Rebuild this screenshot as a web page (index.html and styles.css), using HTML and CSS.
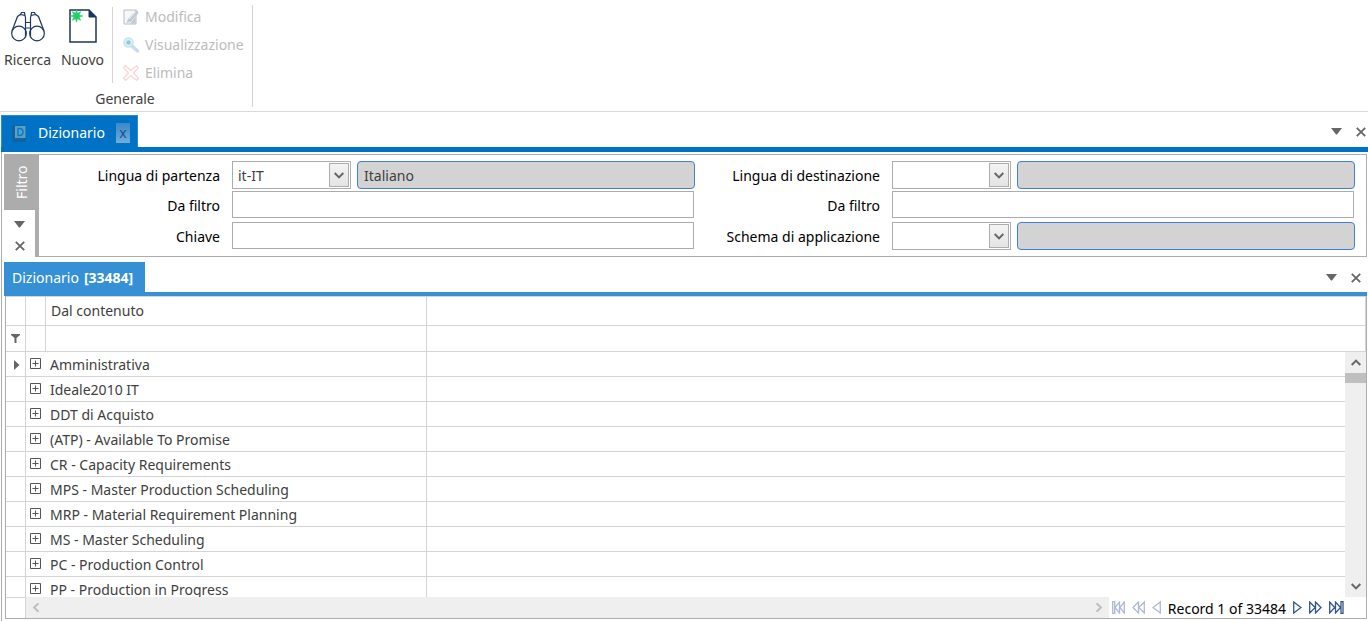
FILE: index.html
```html
<!DOCTYPE html>
<html lang="it">
<head>
<meta charset="utf-8">
<title>Dizionario</title>
<link rel="stylesheet" href="styles.css">
</head>
<body>
<svg class="defs" aria-hidden="true">
  <symbol id="down" viewBox="0 0 12 8"><path d="M0 0h11L6 6.5H5z" fill="#666"/></symbol>
  <symbol id="close" viewBox="0 0 10 10"><path d="M.8.8l8.4 8.4M9.2.8L.8 9.2" fill="none" stroke="#666" stroke-width="1.8"/></symbol>
  <symbol id="chevron" viewBox="0 0 10 7"><path d="M.7 1L5 5.4 9.3 1" fill="none" stroke="currentColor" stroke-width="2"/></symbol>
  <symbol id="plus" viewBox="0 0 11 11"><path d="M.5.5h10v10H.5zM5.5 2.5v6M2.5 5.5h6" fill="none" stroke="#555"/></symbol>
</svg>

<header class="ribbon">
  <section class="group" aria-labelledby="group-title">
    <div class="tools">
      <button class="big" type="button">
        <svg width="34" height="34" viewBox="0 0 34 34" fill="none" stroke="#1d365b" stroke-width="1.2">
          <circle cx="8" cy="24.5" r="7.3"/><circle cx="26" cy="24.5" r="7.3"/>
          <path d="M1 22L6.5 7.5 9.5 5.5 14 6.5 14.5 9v18M33 22L27.5 7.5 24.5 5.5 20 6.5 19.5 9v18M14.5 13.5h5M14.5 19h5M9.5 5.5L10.5 3.5h3L14 6.5M24.5 5.5L23.5 3.5h-3L20 6.5"/>
        </svg>
        <span>Ricerca</span>
      </button>
      <button class="big" type="button">
        <svg width="28" height="34" viewBox="0 0 28 34">
          <path d="M1 1h19l7 7v25H1z" fill="#fff" stroke="#1d365b" stroke-width="1.5"/>
          <path d="M20 1l7 7h-7z" fill="#1d365b" stroke="#1d365b"/>
          <path d="M7.5 1l1 3.3L11.7 2.6 10.2 5.9 14 7l-3.8 1.1 1.5 3.3L8.5 9.7l-1 3.5-1-3.5-3.2 1.7 1.5-3.3L1 7l3.8-1.1L3.3 2.6l3.2 1.7z" fill="#22cf68" stroke="#22cf68" stroke-width=".5"/>
        </svg>
        <span>Nuovo</span>
      </button>
      <div class="smalls">
        <button class="small" type="button" disabled>
          <svg width="16" height="16" viewBox="0 0 16 16"><path d="M1 1h12v14H1z" fill="#f5f7f9" stroke="#b5bec8"/><path d="M14 .5L5 10l-1.500 4L8 12.500 15.500 4z" fill="#c0cad3"/><path d="M12.500 8v6.500H7z" fill="#c0cad3"/><path d="M12.500 3L6 10" stroke="#eef2f5"/></svg>
          Modifica
        </button>
        <button class="small" type="button" disabled>
          <svg width="16" height="16" viewBox="0 0 16 16"><circle cx="5.5" cy="5.5" r="4.5" fill="#dcf3f8" stroke="#c5e3ec" stroke-width="1.5"/><circle cx="5.5" cy="5.5" r="2.2" fill="#8fc8db"/><path d="M9 9l5.5 5" stroke="#c6dfe9" stroke-width="3.5" stroke-linecap="round"/></svg>
          Visualizzazione
        </button>
        <button class="small" type="button" disabled>
          <svg width="16" height="16" viewBox="0 0 16 16"><path d="M2.500.7L8 5.500 13.500.7l2 2L10.500 8l5 5.300-2 2L8 10.500 2.500 15.300l-2-2L5.500 8l-5-5.300z" fill="#fff" stroke="#fbd5d8" stroke-width="1.3"/></svg>
          Elimina
        </button>
      </div>
    </div>
    <div class="group-title" id="group-title">Generale</div>
  </section>
</header>

<main class="workspace">
  <div class="tabs main-tabs">
    <div class="tab main-tab">
      <svg width="14" height="17" viewBox="0 0 14 17"><path d="M1 1h12v15H2L1 15z" fill="#17649c" stroke="#155b90"/><path d="M3 1h10.500v12H3z" fill="#5aa0c0"/><path d="M6 3.500h1.500q3.500 0 3.500 3.500t-3.500 3.500H6z" fill="none" stroke="#087bd0" stroke-width="1.5"/></svg>
      <span>Dizionario</span>
      <button class="tab-close" type="button" aria-label="Chiudi scheda">x</button>
    </div>
    <div class="window-buttons">
      <button type="button" aria-label="Elenco schede"><svg width="12" height="8"><use href="#down"/></svg></button>
      <button type="button" aria-label="Chiudi"><svg width="10" height="10"><use href="#close"/></svg></button>
    </div>
  </div>

  <div class="content">
    <section class="filter" aria-label="Filtro">
      <div class="side">
        <div class="side-tab">Filtro</div>
        <div class="side-buttons">
          <button type="button" aria-label="Riduci filtro"><svg width="12" height="8"><use href="#down"/></svg></button>
          <button type="button" aria-label="Chiudi filtro"><svg width="10" height="10"><use href="#close"/></svg></button>
        </div>
      </div>
      <form class="fields">
        <label for="from">Lingua di partenza</label>
        <div class="lookup">
          <div class="select"><select id="from"><option>it-IT</option></select><span class="drop"><svg width="10" height="7"><use href="#chevron"/></svg></span></div>
          <input class="readonly" value="Italiano" readonly aria-label="Nome lingua di partenza">
        </div>
        <label for="to">Lingua di destinazione</label>
        <div class="lookup">
          <div class="select"><select id="to"><option></option></select><span class="drop"><svg width="10" height="7"><use href="#chevron"/></svg></span></div>
          <input class="readonly" readonly aria-label="Nome lingua di destinazione">
        </div>
        <label for="from-filter">Da filtro</label><input class="text" id="from-filter">
        <label for="to-filter">Da filtro</label><input class="text" id="to-filter">
        <label for="key">Chiave</label><input class="text" id="key">
        <label for="schema">Schema di applicazione</label>
        <div class="lookup">
          <div class="select"><select id="schema"><option></option></select><span class="drop"><svg width="10" height="7"><use href="#chevron"/></svg></span></div>
          <input class="readonly" readonly aria-label="Nome schema di applicazione">
        </div>
      </form>
    </section>

    <div class="tabs sub-tabs">
      <div class="tab sub-tab">Dizionario <b>[33484]</b></div>
      <div class="window-buttons">
        <button type="button" aria-label="Elenco schede"><svg width="12" height="8"><use href="#down"/></svg></button>
        <button type="button" aria-label="Chiudi"><svg width="10" height="10"><use href="#close"/></svg></button>
      </div>
    </div>

    <section class="grid">
      <div class="viewport">
        <table>
          <colgroup><col class="c-mark"><col class="c-expand"><col class="c-name"><col></colgroup>
          <thead>
            <tr class="head"><th></th><th></th><th>Dal contenuto</th><th></th></tr>
            <tr class="filters"><td class="mark"><svg width="9" height="10" viewBox="0 0 9 10"><path d="M0 0h9v1L5.5 4V9h-2V4L0 1z" fill="#666"/></svg></td><td></td><td></td><td></td></tr>
          </thead>
          <tbody>
            <tr><td class="mark"><svg width="6" height="10" viewBox="0 0 6 10"><path d="M0 0l5.5 5L0 10z" fill="#666"/></svg></td><td class="name" colspan="2"><button type="button" aria-label="Espandi"><svg width="11" height="11"><use href="#plus"/></svg></button>Amministrativa</td><td></td></tr>
            <tr><td></td><td class="name" colspan="2"><button type="button" aria-label="Espandi"><svg width="11" height="11"><use href="#plus"/></svg></button>Ideale2010 IT</td><td></td></tr>
            <tr><td></td><td class="name" colspan="2"><button type="button" aria-label="Espandi"><svg width="11" height="11"><use href="#plus"/></svg></button>DDT di Acquisto</td><td></td></tr>
            <tr><td></td><td class="name" colspan="2"><button type="button" aria-label="Espandi"><svg width="11" height="11"><use href="#plus"/></svg></button>(ATP) - Available To Promise</td><td></td></tr>
            <tr><td></td><td class="name" colspan="2"><button type="button" aria-label="Espandi"><svg width="11" height="11"><use href="#plus"/></svg></button>CR - Capacity Requirements</td><td></td></tr>
            <tr><td></td><td class="name" colspan="2"><button type="button" aria-label="Espandi"><svg width="11" height="11"><use href="#plus"/></svg></button>MPS - Master Production Scheduling</td><td></td></tr>
            <tr><td></td><td class="name" colspan="2"><button type="button" aria-label="Espandi"><svg width="11" height="11"><use href="#plus"/></svg></button>MRP - Material Requirement Planning</td><td></td></tr>
            <tr><td></td><td class="name" colspan="2"><button type="button" aria-label="Espandi"><svg width="11" height="11"><use href="#plus"/></svg></button>MS - Master Scheduling</td><td></td></tr>
            <tr><td></td><td class="name" colspan="2"><button type="button" aria-label="Espandi"><svg width="11" height="11"><use href="#plus"/></svg></button>PC - Production Control</td><td></td></tr>
            <tr><td></td><td class="name" colspan="2"><button type="button" aria-label="Espandi"><svg width="11" height="11"><use href="#plus"/></svg></button>PP - Production in Progress</td><td></td></tr>
          </tbody>
        </table>
        <div class="vscroll">
          <button type="button" aria-label="Su"><svg class="up" width="10" height="7"><use href="#chevron"/></svg></button>
          <div class="thumb"></div>
          <button class="last" type="button" aria-label="Giù"><svg width="10" height="7"><use href="#chevron"/></svg></button>
        </div>
      </div>
      <footer class="bottom">
        <div class="corner"></div>
        <div class="hscroll">
          <button type="button" aria-label="Sinistra"><svg class="left" width="10" height="7"><use href="#chevron"/></svg></button>
          <button type="button" aria-label="Destra"><svg class="right" width="10" height="7"><use href="#chevron"/></svg></button>
        </div>
        <nav class="pager" aria-label="Record">
          <button type="button" disabled aria-label="Primo"><svg width="13" height="13" viewBox="0 0 13 13"><path d="M.7.5v12h2V.5zM7.5 1v11L3 6.5zM12.3 1v11L7.8 6.5z"/></svg></button>
          <button type="button" disabled aria-label="Pagina precedente"><svg width="13" height="13" viewBox="0 0 13 13"><path d="M6.5 1v11L1 6.5zM12.3 1v11L6.8 6.5z"/></svg></button>
          <button type="button" disabled aria-label="Precedente"><svg width="9" height="13" viewBox="0 0 9 13"><path d="M8.3 1v11L1 6.5z"/></svg></button>
          <span>Record 1 of 33484</span>
          <button type="button" aria-label="Successivo"><svg width="9" height="13" viewBox="0 0 9 13"><path d="M.7 1v11L8 6.5z"/></svg></button>
          <button type="button" aria-label="Pagina successiva"><svg width="13" height="13" viewBox="0 0 13 13"><path d="M.7 1v11l5.5-5.5zM6.5 1v11l5.5-5.5z"/></svg></button>
          <button type="button" aria-label="Ultimo"><svg width="15" height="13" viewBox="0 0 15 13"><path d="M.7 1v11l5-5.5zM6.5 1v11l5-5.5zM12 .5v12h2V.5z"/></svg></button>
        </nav>
      </footer>
    </section>
  </div>
</main>
</body>
</html>
```

FILE: styles.css
```css
* { box-sizing: border-box; }

body {
  margin: 0;
  height: 100vh;
  display: flex;
  flex-direction: column;
  overflow: hidden;
  background: #fff;
  color: #404040;
  font: 14px/20px "Noto Sans", "Open Sans", sans-serif;
}

button, input, select { font: inherit; color: inherit; margin: 0; }
button { padding: 0; border: 0; background: none; display: flex; align-items: center; justify-content: center; }
svg { display: block; flex: none; }
.defs { position: absolute; width: 0; height: 0; }

/* Ribbon */
.ribbon { flex: none; padding: 5px 0 4px; border-bottom: 1px solid #d9d9d9; display: flex; }
.group { width: 253px; border-right: 1px solid #d4d4d4; }
.tools { display: flex; align-items: flex-start; padding-top: 2px; }
.big { width: 55px; flex-direction: column; gap: 7px; padding-top: 2px; }
.smalls { margin-left: 2px; padding-left: 10px; border-left: 1px solid #d4d4d4; display: flex; flex-direction: column; gap: 8px; }
.small { gap: 6px; color: #bcbcbc; justify-content: flex-start; }
.group-title { text-align: center; line-height: 16px; padding: 8px 2px 0 0; }

/* Tabs */
.workspace { flex: 1; min-height: 0; display: flex; flex-direction: column; padding: 3px 0 0 1px; }
.tabs { display: flex; justify-content: space-between; flex: none; }
.main-tabs { border-bottom: 5px solid #0072c6; }
.tab { color: #fff; display: flex; align-items: center; }
.main-tab { height: 32px; padding: 3px 7px 0 10px; gap: 11px; background: #0072c6; border: 1px solid #2d8bd1; border-bottom: 0; }
.tab-close { width: 14px; height: 20px; background: linear-gradient(#3b88c8, #70addb); color: #1d4f88; }
.main-tab svg { margin-right: 1px; }
.window-buttons { display: flex; align-items: center; gap: 13px; padding: 2px 2px 0; }
.sub-tabs { border-bottom: 4px solid #3590d6; margin: 5px 0 0 2px; }
.sub-tab { height: 30px; padding: 2px 12px 0 8px; background: #3590d6; gap: 5px; }
.sub-tabs .window-buttons { padding-right: 6px; }
.content { flex: 1; min-height: 0; display: flex; flex-direction: column; border-left: 1px solid #acacac; padding: 2px 1px 2px 0; }

/* Filter */
.filter { display: flex; margin-left: 2px; }
.side { width: 35px; display: flex; flex-direction: column; background: #acacac; }
.side-tab { height: 56px; writing-mode: vertical-rl; transform: rotate(180deg); color: #fff; display: flex; align-items: center; justify-content: center; width: 35px; }
.side-buttons { flex: 1; width: 31px; background: #fff; display: flex; flex-direction: column; align-items: center; justify-content: center; gap: 12px; padding-top: 4px; }
.fields {
  flex: 1;
  display: grid;
  grid-template-columns: 181px 1fr 173px 1fr;
  grid-template-rows: 28px 29px 28px;
  column-gap: 12px;
  row-gap: 2px;
  padding: 6px 11px 6px 0;
  border: 1px solid #acacac;
  border-left: 0;
  align-items: start;
  color: #000;
}
.fields label { text-align: right; white-space: nowrap; line-height: 30px; }
.lookup { display: flex; gap: 6px; min-width: 0; height: 28px; color: #404040; }
.select { width: 119px; flex: none; display: grid; border: 1px solid #acacac; align-items: center; }
.select select { grid-area: 1 / 1; width: 100%; height: 26px; appearance: none; border: 0; padding: 2px 28px 0 5px; background: #fff; }
.drop { grid-area: 1 / 1; justify-self: end; margin-right: 1px; width: 20px; height: 24px; border: 1px solid #acacac; background: linear-gradient(#f3f3f3, #e4e4e4); display: flex; align-items: center; justify-content: center; color: #666; pointer-events: none; }
.readonly { flex: 1; min-width: 0; border: 1px solid #3f7fd8; border-radius: 4px; background: #d3d3d3; padding: 2px 6px 0; }
.text { height: 27px; min-width: 0; margin-right: 1px; border: 1px solid #acacac; padding: 0 5px; }

/* Data grid */
.grid { flex: 1; min-height: 0; display: flex; flex-direction: column; margin-left: 3px; border: solid #acacac; border-width: 0 1px 1px; }
.viewport { flex: 1; min-height: 0; overflow: hidden; position: relative; border-top: 1px solid #d4d4d4; }
table { width: 100%; table-layout: fixed; border-collapse: separate; border-spacing: 0; }
.c-mark, .c-expand { width: 20px; }
.c-name { width: 381px; }
th, td { height: 25px; padding: 0 0 0 5px; border: solid #d4d4d4; border-width: 0 1px 1px 0; font-weight: 400; text-align: left; white-space: nowrap; }
.head th { height: 29px; }
.filters td { height: 26px; }
tbody .mark { padding-left: 8px; }
tbody td { padding-top: 1px; }
.name { padding: 1px 0 0 4px; }
.name button { float: left; height: 18px; margin-right: 9px; }
.vscroll { position: absolute; top: 55px; right: 0; bottom: 0; width: 21px; background: #efefef; color: #666; display: flex; flex-direction: column; }
.vscroll button { height: 21px; }
.thumb { height: 10px; background: #bfbfbf; }
.last { margin-top: auto; }
.up { transform: rotate(180deg); }
.bottom { height: 21px; flex: none; display: flex; }
.corner { width: 20px; border: solid #d4d4d4; border-width: 1px 1px 0 0; }
.hscroll { flex: 1; background: #efefef; color: #bfbfbf; display: flex; justify-content: space-between; }
.hscroll button { width: 20px; }
.left { transform: rotate(90deg); }
.right { transform: rotate(-90deg); }
.pager { display: flex; align-items: center; gap: 7px; padding: 0 22px 0 3px; color: #000; }
.pager span { padding-top: 2px; }
.pager path { fill: none; stroke: #34568f; stroke-width: 1.3; }
.pager button:disabled { opacity: .4; }
```
